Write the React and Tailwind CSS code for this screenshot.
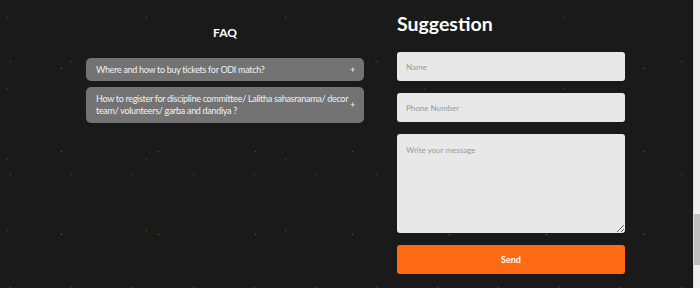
export default function App() {
  return (
    <div className="flex h-[288px] w-[700px] overflow-hidden bg-[#1a1a1a] font-['Lato',sans-serif]">
      <main className="flex-1 bg-[radial-gradient(circle,rgba(170,150,70,0.35)_0.7px,transparent_1.2px),radial-gradient(circle,rgba(170,150,70,0.25)_0.7px,transparent_1.2px),radial-gradient(circle,rgba(170,150,70,0.3)_0.6px,transparent_1.1px)] bg-[length:97px_83px,61px_113px,139px_71px] bg-[position:13px_27px,41px_5px,77px_53px]">
        <div className="flex pl-[86px] pt-[10px]">
          <section className="w-[278px]">
            <h2 className="mt-[15px] mb-[17px] text-center text-[12px] font-bold leading-[16px] text-white">FAQ</h2>
            <div className="flex flex-col gap-[6px]">
              <div className="flex h-[23px] items-center justify-between rounded-[5px] bg-[#737373] pl-[10px] pr-[9px] text-[9px] tracking-[-0.3px] text-[#f2f2f2]">
                <span className="whitespace-nowrap">Where and how to buy tickets for ODI match?</span>
                <span className="shrink-0 text-[9px]">+</span>
              </div>
              <div className="flex h-[36px] items-center justify-between rounded-[5px] bg-[#737373] pl-[10px] pr-[9px] text-[9px] leading-[12px] tracking-[-0.3px] text-[#f2f2f2]">
                <span className="whitespace-nowrap">
                  How to register for discipline committee/ Lalitha sahasranama/ decor
                  <br />
                  team/ volunteers/ garba and dandiya ?
                </span>
                <span className="shrink-0 text-[9px]">+</span>
              </div>
            </div>
          </section>
          <section className="ml-[33px] w-[228px]">
            <h2 className="mb-[14px] text-[19.5px] font-bold leading-[28px] text-white">Suggestion</h2>
            <div className="flex flex-col gap-[12px]">
              <input
                placeholder="Name"
                className="h-[29px] w-full rounded-[3px] bg-[#e8e8e8] px-[9px] text-[8px] text-[#333] outline-none placeholder:text-[#9a9a9a]"
              />
              <input
                placeholder="Phone Number"
                className="h-[29px] w-full rounded-[3px] bg-[#e8e8e8] px-[9px] text-[8px] text-[#333] outline-none placeholder:text-[#9a9a9a]"
              />
              <textarea
                placeholder="Write your message"
                className="block h-[99px] w-full rounded-[3px] bg-[#e8e8e8] px-[9px] py-[10px] text-[8px] text-[#333] outline-none placeholder:text-[#9a9a9a]"
              />
              <button className="h-[29px] w-full rounded-[3px] bg-[#ff6a14] text-[9px] font-bold text-white">
                Send
              </button>
            </div>
          </section>
        </div>
      </main>
      <div className="flex w-[7px] flex-col border-l border-[#dcdcdc] bg-[#f1f1f1]">
        <div className="mt-[214px] h-[51px] bg-[#c1c1c1]"></div>
      </div>
    </div>
  );
}
